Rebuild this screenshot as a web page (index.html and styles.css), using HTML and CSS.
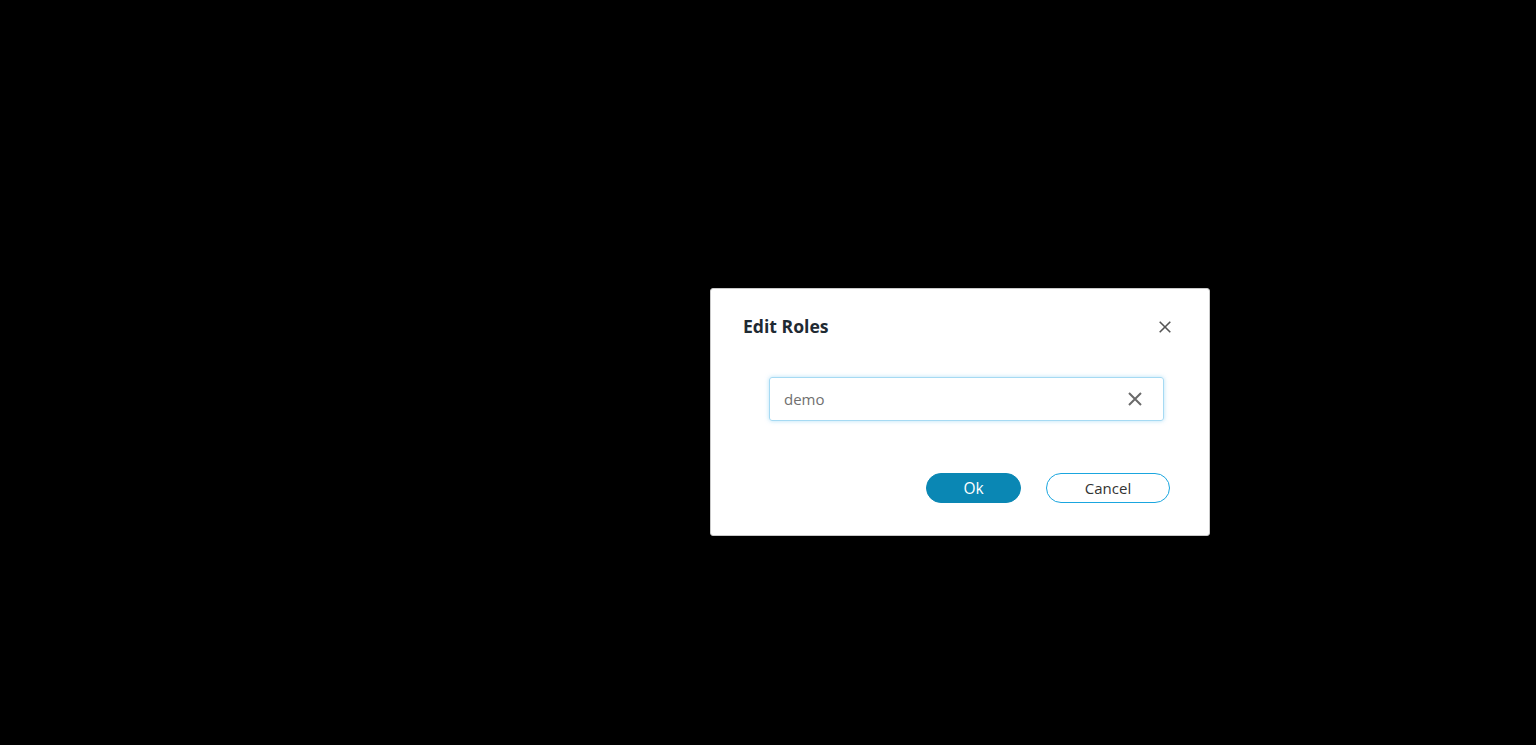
FILE: index.html
```html
<!DOCTYPE html>
<html lang="en">
<head>
<meta charset="utf-8">
<title>Edit Roles</title>
<link rel="stylesheet" href="styles.css">
</head>
<body>
<div class="backdrop">
  <div class="dialog" role="dialog" aria-labelledby="dlg-title">
    <div class="dialog-header">
      <h2 id="dlg-title" class="dialog-title">Edit Roles</h2>
      <button class="close-btn" aria-label="Close">
        <svg width="12" height="12" viewBox="0 0 12 12"><path d="M0.7 0.7 L11.3 11.3 M11.3 0.7 L0.7 11.3" stroke="#555" stroke-width="1.6" fill="none"/></svg>
      </button>
    </div>
    <div class="dialog-body">
      <div class="field">
        <span class="field-value">demo</span>
        <button class="clear-btn" aria-label="Clear">
          <svg width="14" height="14" viewBox="0 0 14 14"><path d="M1 1 L13 13 M13 1 L1 13" stroke="#6a6a6a" stroke-width="2" fill="none"/></svg>
        </button>
      </div>
    </div>
    <div class="dialog-footer">
      <button class="btn btn-primary">Ok</button>
      <button class="btn btn-outline">Cancel</button>
    </div>
  </div>
</div>
</body>
</html>
```

FILE: styles.css
```css
html, body {
  margin: 0;
  padding: 0;
  background: #000;
  height: 100%;
}
body {
  font-family: "Open Sans", "Liberation Sans", sans-serif;
}
.backdrop {
  position: relative;
  width: 1536px;
  height: 745px;
  background: #000;
}
.dialog {
  position: absolute;
  left: 710px;
  top: 288px;
  width: 500px;
  height: 248px;
  box-sizing: border-box;
  background: #fff;
  border: 1px solid #c9c9c9;
  border-radius: 3px;
  display: flex;
  flex-direction: column;
}
.dialog-header {
  display: flex;
  align-items: center;
  justify-content: space-between;
  padding: 24px 38px 0 32px;
}
.dialog-title {
  margin: 0;
  font-size: 17.6px;
  line-height: 26px;
  font-weight: 700;
  color: #1f2a33;
}
.close-btn {
  border: 0;
  background: none;
  padding: 0;
  margin-top: 2px;
  width: 12px;
  height: 12px;
  display: flex;
}
.dialog-body {
  padding: 38px 0 0 58px;
}
.field {
  width: 395px;
  height: 44px;
  box-sizing: border-box;
  border: 1px solid #a6daf3;
  border-radius: 3px;
  box-shadow: 0 0 4px rgba(120, 200, 240, 0.55);
  display: flex;
  align-items: center;
  padding: 0 21px 0 14px;
}
.field-value {
  flex: 1;
  font-size: 15px;
  color: #707070;
}
.clear-btn {
  border: 0;
  background: none;
  padding: 0;
  width: 14px;
  height: 14px;
  display: flex;
}
.dialog-footer {
  display: flex;
  justify-content: flex-end;
  gap: 25px;
  padding: 52px 39px 0 0;
}
.btn {
  height: 30px;
  border-radius: 15px;
  font-family: "Open Sans", "Liberation Sans", sans-serif;
  font-size: 15px;
  padding: 0;
  box-sizing: border-box;
}
.btn-primary {
  width: 95px;
  background: #0a87b4;
  border: 1px solid #0a87b4;
  color: #fff;
  font-size: 15.5px;
}
.btn-outline {
  width: 124px;
  background: #fff;
  border: 1px solid #1aa6df;
  color: #333;
}
```
